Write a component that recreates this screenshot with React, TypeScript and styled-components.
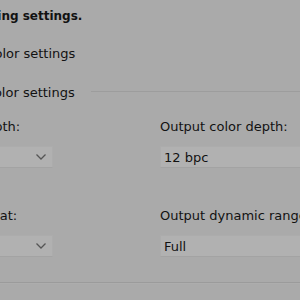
import React from "react";
import styled, { createGlobalStyle } from "styled-components";

const Global = createGlobalStyle`
  html, body {
    margin: 0;
    padding: 0;
    background: #aaaaaa;
    overflow: hidden;
  }
  body {
    width: 300px;
    height: 300px;
    font-family: "DejaVu Sans", Verdana, sans-serif;
    font-size: 13px;
    color: #121212;
  }
`;

const Page = styled.div`
  width: 300px;
  height: 300px;
  overflow: hidden;
  position: relative;
`;

const Content = styled.div`
  margin-left: -131px;
  padding-top: 9px;
  display: flex;
  flex-direction: column;
  width: 500px;
`;

const Title = styled.div`
  font-weight: bold;
  font-size: 12px;
  line-height: 14px;
  white-space: nowrap;
  padding-left: 1px;
`;

const RadioGroup = styled.div`
  display: flex;
  flex-direction: column;
  gap: 24px;
  margin-top: 23px;
  padding-left: 22px;
`;

const RadioRow = styled.label`
  display: flex;
  align-items: center;
  height: 15px;
  line-height: 15px;
  white-space: nowrap;
`;

const RadioDot = styled.span`
  width: 12px;
  height: 12px;
  border-radius: 50%;
  border: 1px solid #555;
  box-sizing: border-box;
  margin-right: 6px;
  background: #b4b4b4;
`;

const RadioText = styled.span`
  flex: none;
`;

const GroupRule = styled.span`
  flex: 1;
  height: 0;
  border-top: 1px solid #9d9d9d;
  margin-left: 16px;
  margin-top: -2px;
`;

const Form = styled.div`
  display: grid;
  grid-template-columns: 169px 169px;
  column-gap: 107px;
  row-gap: 40px;
  margin-top: 19px;
  padding-left: 15px;
`;

const Field = styled.div`
  display: flex;
  flex-direction: column;
  gap: 12px;
`;

const Label = styled.div`
  line-height: 15px;
  white-space: nowrap;
`;

const Select = styled.div`
  height: 22px;
  box-sizing: border-box;
  background: #b1b1b1;
  border: 1px solid #acacac;
  border-bottom-color: #a3a3a3;
  display: flex;
  align-items: center;
  justify-content: space-between;
  padding: 0 6px 0 3px;
  line-height: 15px;
  white-space: nowrap;
`;

const Chevron = styled.svg`
  width: 10px;
  height: 6px;
  flex: none;
`;

const BottomRule = styled.div`
  margin-top: 25px;
  margin-left: 131px;
  width: 300px;
  height: 0;
  border-top: 1px solid #9b9b9b;
  border-bottom: 1px solid #adadad;
`;

function Dropdown({ value }: { value: string }) {
  return (
    <Select>
      <span>{value}</span>
      <Chevron viewBox="0 0 10 6">
        <path d="M0.5 0.5 L5 5 L9.5 0.5" fill="none" stroke="#555" strokeWidth="1.3" />
      </Chevron>
    </Select>
  );
}

export default function App() {
  return (
    <Page>
      <Global />
      <Content>
        <Title>3. Apply the following settings.</Title>
        <RadioGroup>
          <RadioRow>
            <RadioDot />
            <RadioText>Use default color settings</RadioText>
          </RadioRow>
          <RadioRow>
            <RadioDot />
            <RadioText>Use NVIDIA color settings</RadioText>
            <GroupRule />
          </RadioRow>
        </RadioGroup>
        <Form>
          <Field>
            <Label>Desktop color depth:</Label>
            <Dropdown value="Highest (32-bit)" />
          </Field>
          <Field>
            <Label>Output color depth:</Label>
            <Dropdown value="12 bpc" />
          </Field>
          <Field>
            <Label>Output color format:</Label>
            <Dropdown value="RGB" />
          </Field>
          <Field>
            <Label>Output dynamic range:</Label>
            <Dropdown value="Full" />
          </Field>
        </Form>
        <BottomRule />
      </Content>
    </Page>
  );
}
